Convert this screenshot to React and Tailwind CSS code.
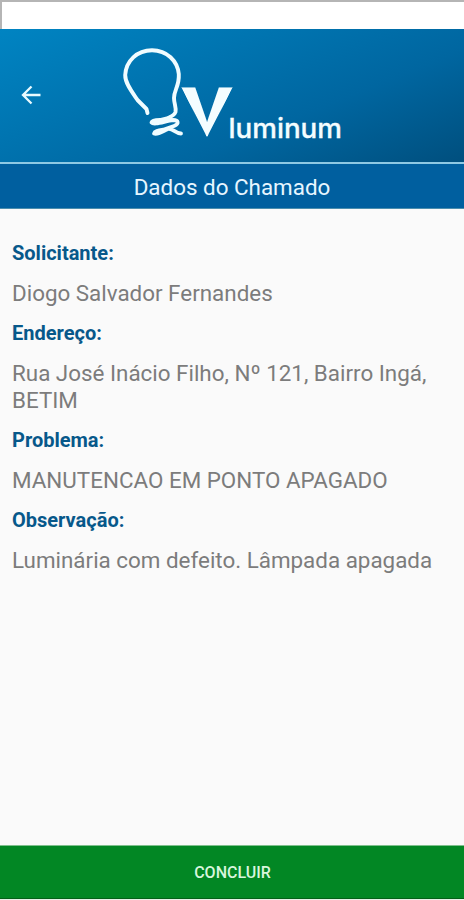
const fields = [
  { label: 'Solicitante:', lines: ['Diogo Salvador Fernandes'] },
  { label: 'Endereço:', lines: ['Rua José Inácio Filho, Nº 121, Bairro Ingá,', 'BETIM'] },
  { label: 'Problema:', lines: ['MANUTENCAO EM PONTO APAGADO'] },
  { label: 'Observação:', lines: ['Luminária com defeito. Lâmpada apagada'] },
];

function Logo() {
  return (
    <svg width="240" height="115" viewBox="0 0 240 115" className="block shrink-0" role="img" aria-label="V luminum">
      <defs>
        <clipPath id="tip">
          <path d="M60 40H133L122.500 51.500L97 101L71.500 51.500Z" />
        </clipPath>
      </defs>
      <g fill="none" stroke="#f0fcff" strokeLinecap="round" strokeLinejoin="round">
        <path
          strokeWidth="3.900"
          d="M37.500 77L36.500 73L27.500 64C22 56 15 47 15.200 39C16 25 27 14.200 42 14.200C57 14.200 67.500 25 68.800 38C69.500 50 64 54 64 62C64 68 66.500 71 65.500 76C64.500 79 61.500 80.500 59 81.500"
        />
        <path strokeWidth="3.800" d="M60 81.500L50 84C45 84 42 84.500 41.500 86.500C44 89.500 55 85 63 84C68.500 84 69.500 87.500 64 90L54 93.500C48 94.500 44.500 95 44 97.500C48 99 53 95 58 93C63 92 65 97.500 71 97.500" />
      </g>
      <g fill="#f4fdff">
        <text x="72.500" y="100" fontFamily="Liberation Sans, sans-serif" fontWeight="700" fontSize="69" textLength="49" lengthAdjust="spacingAndGlyphs" stroke="#f4fdff" strokeWidth="3" clipPath="url(#tip)">V</text>
        <text x="118.500" y="101.500" fontFamily="Inter, sans-serif" fontWeight="500" fontSize="27.500" textLength="113.500" lengthAdjust="spacingAndGlyphs" stroke="#f4fdff" strokeWidth="0.300">luminum</text>
      </g>
    </svg>
  );
}

export default function App() {
  return (
    <main className="flex h-[900px] w-[464px] flex-col overflow-hidden bg-[#fafafa] font-['Roboto',sans-serif]">
      <div className="h-[29px] shrink-0 border-t-2 border-l-2 border-[#b5b5b5] bg-white" />
      <header className="flex h-[133px] shrink-0 bg-[linear-gradient(158deg,#0084c2_0%,#0074b0_35%,#0066a0_65%,#004f7e_100%)] pt-[7px]">
        <button aria-label="Voltar" className="ml-[20px] flex h-[118px] w-[90px] items-center">
          <svg width="22" height="20" viewBox="0 0 22 20" fill="none" stroke="#e8faff" strokeWidth="2.3">
            <path d="M20.500 10H3M11.500 1.500L3 10L11.500 18.500" />
          </svg>
        </button>
        <Logo />
      </header>
      <h1 className="flex h-[47px] shrink-0 items-center justify-center border-t-2 border-b border-t-[#8ec9e4] border-b-[#4b8eae] bg-[#005f9f] pt-[2px] text-[22.4px] leading-[27px] text-[#e6f6ff]">
        Dados do Chamado
      </h1>
      <dl className="flex-1 px-3 pt-[31px]">
        {fields.map((f) => (
          <div key={f.label} className="mb-[13px]">
            <dt className="text-[20px] leading-[27px] font-bold text-[#07588a]">{f.label}</dt>
            <dd className="mt-[13px] text-[22.4px] leading-[27px] whitespace-nowrap text-[#7c7c7c]">
              {f.lines.map((line) => (
                <div key={line}>{line}</div>
              ))}
            </dd>
          </div>
        ))}
      </dl>
      <button className="flex h-[54px] shrink-0 items-center justify-center border-t border-b border-t-[#7fc08d] border-b-[#046018] bg-[#028724] pt-px pl-px text-[16px] font-medium text-[#d8f5dd]">
        CONCLUIR
      </button>
      <div className="h-px shrink-0 bg-[#e5f2e7]" />
    </main>
  );
}
